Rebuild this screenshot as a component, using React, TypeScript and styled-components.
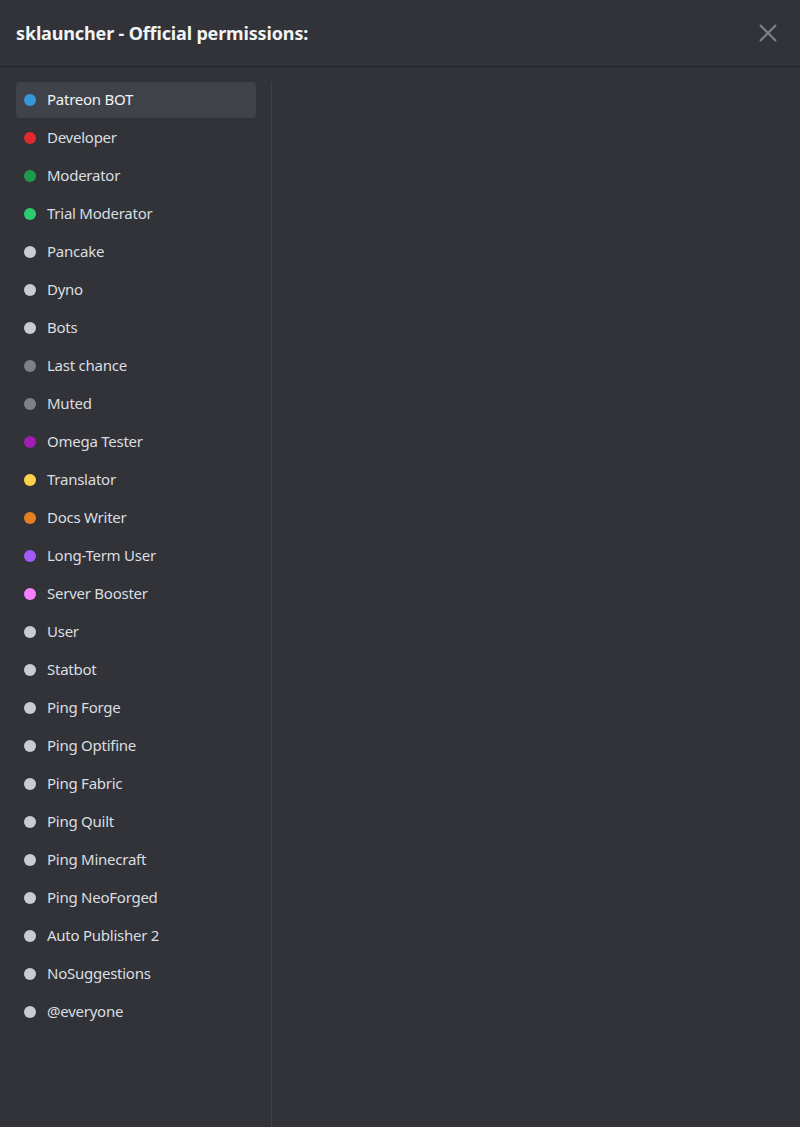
import styled, { createGlobalStyle } from 'styled-components';

const GlobalStyle = createGlobalStyle`
  html, body {
    margin: 0;
    padding: 0;
    background: #313338;
  }
  * {
    box-sizing: border-box;
  }
`;

const Modal = styled.div`
  width: 800px;
  height: 1127px;
  display: flex;
  flex-direction: column;
  background: #313338;
  font-family: 'Noto Sans', 'Open Sans', sans-serif;
  color: #dbdee1;
`;

const Header = styled.header`
  height: 67px;
  flex-shrink: 0;
  display: flex;
  align-items: center;
  justify-content: space-between;
  padding: 0 16px;
  border-bottom: 1px solid #222327;
`;

const Title = styled.h1`
  margin: 0 0 1px;
  font-size: 18px;
  font-weight: 700;
  letter-spacing: -0.15px;
  color: #f2f3f5;
`;

const CloseButton = styled.button`
  width: 24px;
  height: 24px;
  padding: 0;
  margin-right: 4px;
  border: none;
  background: none;
  color: #80848e;
  display: flex;
  align-items: center;
  justify-content: center;
  cursor: pointer;
`;

const Body = styled.div`
  flex: 1;
  display: flex;
  padding-top: 15px;
`;

const Sidebar = styled.ul`
  width: 272px;
  margin: 0;
  padding: 0 15px 0 16px;
  list-style: none;
  display: flex;
  flex-direction: column;
  gap: 2px;
  border-right: 1px solid #3f4147;
`;

const RoleRow = styled.li<{ $active?: boolean }>`
  height: 36px;
  display: flex;
  align-items: center;
  gap: 11px;
  padding: 0 8px 2px;
  border-radius: 4px;
  font-size: 15px;
  letter-spacing: -0.25px;
  background: ${(p) => (p.$active ? '#404249' : 'transparent')};
  color: ${(p) => (p.$active ? '#f2f3f5' : '#dbdee1')};
  cursor: pointer;
`;

const Dot = styled.span<{ $color: string }>`
  width: 12px;
  height: 12px;
  margin-top: 2px;
  border-radius: 50%;
  flex-shrink: 0;
  background: ${(p) => p.$color};
`;

const Content = styled.div`
  flex: 1;
`;

const LIGHT = '#c9cdd2';
const DIM = '#7e8287';

const roles: { name: string; color: string }[] = [
  { name: 'Patreon BOT', color: '#3498db' },
  { name: 'Developer', color: '#e02a2e' },
  { name: 'Moderator', color: '#1f9a4c' },
  { name: 'Trial Moderator', color: '#2ecc71' },
  { name: 'Pancake', color: LIGHT },
  { name: 'Dyno', color: LIGHT },
  { name: 'Bots', color: LIGHT },
  { name: 'Last chance', color: DIM },
  { name: 'Muted', color: DIM },
  { name: 'Omega Tester', color: '#a21db1' },
  { name: 'Translator', color: '#ffd24a' },
  { name: 'Docs Writer', color: '#e67e22' },
  { name: 'Long-Term User', color: '#a25cf5' },
  { name: 'Server Booster', color: '#f47fff' },
  { name: 'User', color: LIGHT },
  { name: 'Statbot', color: LIGHT },
  { name: 'Ping Forge', color: LIGHT },
  { name: 'Ping Optifine', color: LIGHT },
  { name: 'Ping Fabric', color: LIGHT },
  { name: 'Ping Quilt', color: LIGHT },
  { name: 'Ping Minecraft', color: LIGHT },
  { name: 'Ping NeoForged', color: LIGHT },
  { name: 'Auto Publisher 2', color: LIGHT },
  { name: 'NoSuggestions', color: LIGHT },
  { name: '@everyone', color: LIGHT },
];

export default function App() {
  return (
    <Modal>
      <GlobalStyle />
      <Header>
        <Title>sklauncher - Official permissions:</Title>
        <CloseButton aria-label="Close">
          <svg width="20" height="20" viewBox="0 0 20 20" fill="none">
            <path d="M2 2L18 18M18 2L2 18" stroke="currentColor" strokeWidth="2" />
          </svg>
        </CloseButton>
      </Header>
      <Body>
        <Sidebar>
          {roles.map((role, i) => (
            <RoleRow key={role.name} $active={i === 0}>
              <Dot $color={role.color} />
              {role.name}
            </RoleRow>
          ))}
        </Sidebar>
        <Content />
      </Body>
    </Modal>
  );
}
